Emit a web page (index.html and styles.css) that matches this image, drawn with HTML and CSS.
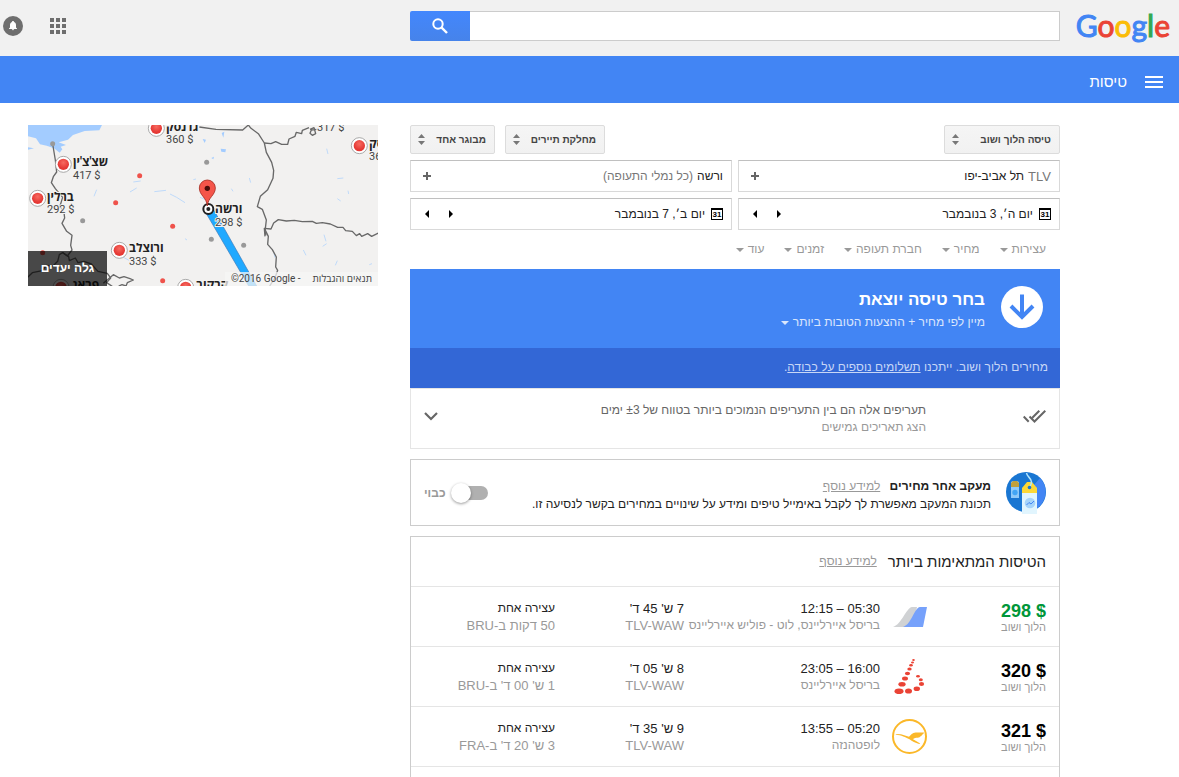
FILE: index.html
```html
<!DOCTYPE html>
<html lang="he" dir="rtl">
<head>
  <meta charset="UTF-8" />
  <title>טיסות</title>
  <meta name="viewport" content="width=device-width, initial-scale=1.0">
  <link rel="stylesheet" href="styles.css">
</head>
<body>
  <header class="topbar">
    <a class="logo" href="#" dir="ltr"><span class="b">G</span><span class="r">o</span><span class="y">o</span><span class="b">g</span><span class="g">l</span><span class="r">e</span></a>
    <form class="search">
      <input type="text" aria-label="חיפוש">
      <button type="button" aria-label="חפש">
        <svg width="16" height="16" viewBox="0 0 16 16" fill="none" stroke="#fff"><circle cx="6" cy="6" r="4.7" stroke-width="2"/><path d="M9.4 9.4L15 15" stroke-width="2.4"/></svg>
      </button>
    </form>
    <div class="top-icons">
      <a href="#" aria-label="אפליקציות">
        <svg width="16" height="16" viewBox="0 0 16 16" fill="#6e6e6e"><path d="M0 0h4v4H0zM6 0h4v4H6zM12 0h4v4h-4zM0 6h4v4H0zM6 6h4v4H6zM12 6h4v4h-4zM0 12h4v4H0zM6 12h4v4H6zM12 12h4v4h-4z"/></svg>
      </a>
      <a href="#" aria-label="התראות">
        <svg width="20" height="20" viewBox="0 0 20 20"><circle cx="10" cy="10" r="10" fill="#6e6e6e"/><path d="M10 5c.7 0 1 .4 1 1 1.500.5 2 1.700 2 3v2.500l1 1V13H6v-.5l1-1V9c0-1.300.6-2.500 2-3 0-.6.3-1 1-1zM8.800 13.300h2.400a1.200 1 0 0 1-2.400 0z" fill="#fff"/></svg>
      </a>
    </div>
  </header>

  <nav class="bluebar">
    <button type="button" aria-label="תפריט">
      <svg width="18" height="12" viewBox="0 0 18 12" fill="#fff"><path d="M0 0h18v2H0zM0 5h18v2H0zM0 10h18v2H0z"/></svg>
    </button>
    <a href="#">טיסות</a>
  </nav>

  <div class="page">
    <main>
      <div class="options">
        <label class="pick pick-trip">
          <select aria-label="סוג טיסה"><option>טיסה הלוך ושוב</option></select>
          <svg width="7" height="11" viewBox="0 0 7 11" fill="#777"><path d="M0 4l3.500-4L7 4zM0 7h7l-3.500 4z"/></svg>
        </label>
        <label class="pick pick-class">
          <select aria-label="מחלקה"><option>מחלקת תיירים</option></select>
          <svg width="7" height="11" viewBox="0 0 7 11" fill="#777"><path d="M0 4l3.500-4L7 4zM0 7h7l-3.500 4z"/></svg>
        </label>
        <label class="pick pick-people">
          <select aria-label="נוסעים"><option>מבוגר אחד</option></select>
          <svg width="7" height="11" viewBox="0 0 7 11" fill="#777"><path d="M0 4l3.500-4L7 4zM0 7h7l-3.500 4z"/></svg>
        </label>
      </div>

      <div class="fields">
        <div class="field">
          <span class="code">TLV</span>
          <input type="text" value="תל אביב-יפו" aria-label="מוצא">
          <button type="button" aria-label="הוסף מוצא"><svg width="8" height="8" viewBox="0 0 8 8" fill="#666"><path d="M3 0h2v3h3v2H5v3H3V5H0V3h3z"/></svg></button>
        </div>
        <div class="field">
          <input class="city" type="text" value="ורשה" aria-label="יעד">
          <span class="muted grow">(כל נמלי התעופה)</span>
          <button type="button" aria-label="הוסף יעד"><svg width="8" height="8" viewBox="0 0 8 8" fill="#666"><path d="M3 0h2v3h3v2H5v3H3V5H0V3h3z"/></svg></button>
        </div>
        <div class="field date">
          <svg class="cal" width="12" height="12" viewBox="0 0 12 12"><path d="M0 0h12v12H0zM1 2v9h10V2z" fill="#000" fill-rule="evenodd"/><text x="6" y="9" text-anchor="middle">31</text></svg>
          <input type="text" value="יום ה׳, 3 בנובמבר" aria-label="תאריך יציאה">
          <button type="button" aria-label="יום קודם"><svg width="4" height="8" viewBox="0 0 4 8"><path d="M0 0l4 4-4 4z"/></svg></button>
          <button type="button" aria-label="יום הבא"><svg width="4" height="8" viewBox="0 0 4 8"><path d="M4 0L0 4l4 4z"/></svg></button>
        </div>
        <div class="field date">
          <svg class="cal" width="12" height="12" viewBox="0 0 12 12"><path d="M0 0h12v12H0zM1 2v9h10V2z" fill="#000" fill-rule="evenodd"/><text x="6" y="9" text-anchor="middle">31</text></svg>
          <input type="text" value="יום ב׳, 7 בנובמבר" aria-label="תאריך חזרה">
          <button type="button" aria-label="יום קודם"><svg width="4" height="8" viewBox="0 0 4 8"><path d="M0 0l4 4-4 4z"/></svg></button>
          <button type="button" aria-label="יום הבא"><svg width="4" height="8" viewBox="0 0 4 8"><path d="M4 0L0 4l4 4z"/></svg></button>
        </div>
      </div>

      <div class="filters">
        <button type="button">עצירות</button>
        <button type="button">מחיר</button>
        <button type="button">חברת תעופה</button>
        <button type="button">זמנים</button>
        <button type="button">עוד</button>
      </div>

      <section class="choose">
        <svg width="42" height="42" viewBox="0 0 42 42" fill="none"><circle cx="21" cy="21" r="21" fill="#fff"/><path d="M21 8.500v22M10 20l11 11 11-11" stroke="#4285f4" stroke-width="4"/></svg>
        <div>
          <h1>בחר טיסה יוצאת</h1>
          <button class="sort" type="button">מיין לפי מחיר + ההצעות הטובות ביותר</button>
        </div>
      </section>
      <p class="fees">מחירים הלוך ושוב. ייתכנו <a href="#">תשלומים נוספים על כבודה</a>.</p>

      <section class="flex-dates">
        <svg class="checks" width="23" height="13" viewBox="0 0 23 13" fill="none" stroke="#666" stroke-width="2"><path d="M.7 6.500l5 5.300M6.500 6.500l5 5L22.300.8M9.300 7.800L16.300.8"/></svg>
        <div class="grow">
          <p>תעריפים אלה הם בין התעריפים הנמוכים ביותר בטווח של ±3 ימים</p>
          <a href="#">הצג תאריכים גמישים</a>
        </div>
        <button type="button" aria-label="הרחב"><svg width="14" height="9" viewBox="0 0 14 9" fill="none" stroke="#666" stroke-width="2.200"><path d="M1 1l6 6 6-6"/></svg></button>
      </section>

      <section class="track">
        <svg width="40" height="42" viewBox="0 0 40 42">
          <circle cx="20" cy="20" r="20" fill="#1976d2"/>
          <path d="M34 6A20 20 0 0 1 16 39.500V27z" fill="#4285f4"/>
          <path d="M5 14.500V10l2-1h4l2 1v16H5z" fill="#90caf9"/>
          <path d="M5 15v-4l2-2h4l2 2v4z" fill="#c0a03c"/>
          <circle cx="9" cy="20.500" r="2.700" fill="#42a5f5"/>
          <path d="M16 21h15v21H16z" fill="#e1f5fe"/>
          <path d="M16 21v-5l5-6h5l5 6v5z" fill="#fdd835"/>
          <circle cx="24" cy="31" r="5.300" fill="#a6d4fa"/>
          <path d="M20.500 33l2.500-2.500 2 1.500 3-3" fill="none" stroke="#4285f4"/>
          <path d="M20.500 1c.5 4 5 5 5 9 0 2-1 3-1.500 4.500" fill="none" stroke="#b3e5fc" stroke-width="1.500"/>
          <circle cx="23.500" cy="15.500" r="1.800" fill="#1976d2"/>
        </svg>
        <div class="track-text grow">
          <p><strong>מעקב אחר מחירים</strong> <a href="#">למידע נוסף</a></p>
          <p>תכונת המעקב מאפשרת לך לקבל באימייל טיפים ומידע על שינויים במחירים בקשר לנסיעה זו.</p>
        </div>
        <label class="switch"><input type="checkbox"><span>כבוי</span></label>
      </section>

      <section class="results">
        <div class="results-head"><h2>הטיסות המתאימות ביותר</h2><a href="#">למידע נוסף</a></div>
        <table>
          <colgroup><col class="c-price"><col class="c-logo"><col class="c-time"><col class="c-dur"><col></colgroup>
          <tr>
            <td class="price best"><b>$ 298</b><small>הלוך ושוב</small></td>
            <td><svg width="35" height="35" viewBox="0 0 35 35"><path d="M1 28C10 25 14 9 20 8h5l-4 20z" fill="#d0d2d4"/><path d="M11 28C20 25 22 9 28 8h7l-4 20z" fill="#76a1fb"/></svg></td>
            <td>05:30 – 12:15<span class="airline">בריסל איירליינס, לוט - פוליש איירליינס</span></td>
            <td>7 ש' 45 ד'<span>TLV-WAW</span></td>
            <td><div class="stops">עצירה אחת</div><span>50 דקות ב-BRU</span></td>
          </tr>
          <tr>
            <td class="price"><b>$ 320</b><small>הלוך ושוב</small></td>
            <td><svg width="35" height="35" viewBox="0 0 35 35" fill="#ea4335"><ellipse cx="21.500" cy="1" rx="1.300" ry="1"/><ellipse cx="20.500" cy="3.500" rx="1.500" ry="1"/><ellipse cx="19" cy="6.200" rx="1.800" ry="1.200"/><ellipse cx="17.500" cy="10" rx="2.200" ry="1.500"/><ellipse cx="15.500" cy="14.500" rx="2.600" ry="1.800"/><ellipse cx="13" cy="19.500" rx="3" ry="2"/><ellipse cx="10" cy="25.300" rx="3.600" ry="2.300"/><ellipse cx="7" cy="32.300" rx="4.500" ry="2.800"/><ellipse cx="16.500" cy="32" rx="3.500" ry="2.600"/><ellipse cx="24.800" cy="29.700" rx="3.200" ry="2.300"/><ellipse cx="29.500" cy="25" rx="2.600" ry="2"/><ellipse cx="28.800" cy="20.800" rx="2" ry="1.500"/><ellipse cx="26" cy="17.300" rx="1.900" ry="1.300"/></svg></td>
            <td>16:00 – 23:05<span class="airline">בריסל איירליינס</span></td>
            <td>8 ש' 05 ד'<span>TLV-WAW</span></td>
            <td><div class="stops">עצירה אחת</div><span>1 ש' 00 ד' ב-BRU</span></td>
          </tr>
          <tr>
            <td class="price"><b>$ 321</b><small>הלוך ושוב</small></td>
            <td><svg width="35" height="35" viewBox="0 0 35 35"><circle cx="17.500" cy="17.500" r="16.500" fill="none" stroke="#fbb829" stroke-width="2"/><path d="M4 15l5 .2 8 2.500c3-3 4-4.200 8-4.200h7c-.5 1.500-1 2-2 2.200-.4 1-.8 1.500-1.800 1.700-.6 1-2 1.400-4 1.400-1.500.2-2 1-3.500 1.200l7.500 4.500-1 .6c-4-1.600-7-2.600-9.700-4.800C13 18 10 16.500 3.500 15.500z" fill="#fbb829"/></svg></td>
            <td>05:20 – 13:55<span class="airline">לופטהנזה</span></td>
            <td>9 ש' 35 ד'<span>TLV-WAW</span></td>
            <td><div class="stops">עצירה אחת</div><span>3 ש' 20 ד' ב-FRA</span></td>
          </tr>
        </table>
      </section>
    </main>

    <aside class="map">
      <svg class="map-art" width="350" height="161" viewBox="0 0 350 161">
        <defs>
          <radialGradient id="dot" cx="50%" cy="35%"><stop offset="0" stop-color="#f76a60"/><stop offset="1" stop-color="#e53935"/></radialGradient>
          <g id="city"><circle cx="0" cy="0" r="24" fill="#fff" stroke="#999" stroke-width="2.500"/><circle cx="0" cy="0" r="17" fill="url(#dot)"/></g>
        </defs>
        <g transform="translate(-8 -7) scale(.33333)">
          <path d="M24 21h222l-8 16-44 2-35 12-15 14-28 8 22 8-16 5 5 8-8 10-17-13-22-8-20-4-12-18-24-6z" fill="#a3ccff"/>
          <g fill="#a3ccff"><path d="M605 45l8-4-3 18zM602 92l16 2-2 9-12-2zM548 63l10 2-4 10zM574 120l8-4-2 8zM24 88l18 3-18 4z"/></g>
          <g fill="none" stroke="#b5d5fb" stroke-width="2.500">
            <path d="M340 192l22-3M350 210l-20 12M403 221l35-4M450 228l20 10 25 16M540 238l20 8M688 180l4 14M634 212l5 8M230 215l-8 20M305 415l22 12M762 405l3 14M850 396l8 16M912 350l6 20M908 385l12-8M946 442l6-14M952 242l10 7M984 218l2 10M920 92l4 16M952 182l18-2M1048 440l8-3M495 362l6 4M520 185l8-2"/>
          </g>
          <g fill="none" stroke="#686868" stroke-width="4" stroke-linejoin="round">
            <path d="M98 78l8 48 4 36-10 14-6 18 12 18 22 26-8 26 12 20 2 16-8 16 14 24 16 12-4 30 4 14-14 18-14-10-10 6-5 20-14 14-20-2-12 16-30 6-14 14"/>
            <path d="M128 404l18 12 2 12 18-8 8 14 18-4 22 8 20 22 28 6 10 14-12 14 18 12"/>
            <path d="M250 496l30-26 18 10 14-4 18 6 10 4-18 8-4 10-12-4-10 4"/>
            <path d="M538 27l50 7 80 2 17-15M685 21l8 10 22 16 18 28 6 28 16 30 6 24-2 24-16 34-22 20-9 31 15 8 12 32-4 34 3 12"/>
            <path d="M733 75l20 2 14-6 18 8 18 0 4-16 18-8 4-12 16 4 2-10 20-8M870 34l12-5 5 18-10 5-7-6 4-10 16-2"/>
            <path d="M735 355l-2-24 20 2 8-18 14-10 24 4 24-2 24 4 30-1 12 6 18-2 24 4 22 10 16 0 8 10 20 2 12 13 10-6 6 8 18-8 12 8 20-10"/>
            <path d="M735 335l10 20-2 24 14 16 12 22-2 30 6 10-8 22-16 25"/>
          </g>
          <path d="M555 280L686 504h24L578 270z" fill="#20a9ff" stroke="#3c78b8" stroke-width="2"/>
          <g fill="#ef524b"><circle cx="359" cy="173" r="7.500"/><circle cx="287" cy="254" r="7.500"/><circle cx="458" cy="325" r="7.500"/><circle cx="428" cy="488" r="7.500"/><circle cx="68" cy="404" r="7.500"/></g>
          <g fill="#999"><circle cx="98" cy="77" r="7.500"/><circle cx="560" cy="133" r="7.500"/><circle cx="188" cy="308" r="7.500"/><circle cx="574" cy="364" r="7.500"/><circle cx="671" cy="382" r="7.500"/></g>
          <use href="#city" x="409" y="31"/><use href="#city" x="1018" y="83"/><use href="#city" x="130" y="139"/><use href="#city" x="53" y="241"/><use href="#city" x="298" y="397"/><use href="#city" x="497" y="508"/><use href="#city" x="123" y="508"/>
          <circle cx="565" cy="273" r="15" fill="#fff" stroke="#222" stroke-width="6"/><circle cx="565" cy="273" r="6" fill="#222"/>
          <path d="M562 264c-2-26-24-32-24-54a24 24 0 0 1 48 0c0 22-22 28-24 54z" fill="#f4554a" stroke="#a52c22" stroke-width="2.500"/><circle cx="562" cy="211" r="8" fill="#4a0d0a"/>
        </g>
        <g class="city-name"><text x="138" y="6">גדנסק</text><text x="341" y="23">מינסק</text><text x="45" y="41">שצ'צ'ין</text><text x="19" y="76">ברלין</text><text x="187" y="88">ורשה</text><text x="101" y="127">ורוצלב</text><text x="44" y="164">פראג</text><text x="168" y="164">קרקוב</text></g>
        <g class="city-price"><text x="138" y="18">360 $</text><text x="289" y="6">317 $</text><text x="341" y="35">369 $</text><text x="45" y="54">417 $</text><text x="19" y="88">292 $</text><text x="187" y="101">298 $</text><text x="101" y="140">333 $</text></g>
      </svg>
      <a class="explore" href="#">גלה יעדים</a>
      <div class="credit"><a href="#">תנאים והגבלות</a><span dir="ltr">©2016 Google -</span></div>
    </aside>
  </div>
</body>
</html>
```
FILE: styles.css
```css
* {
  box-sizing: border-box;
  margin: 0;
  padding: 0;
}

body {
  display: flex;
  flex-direction: column;
  min-height: 100vh;
  font-family: "Liberation Sans", Arial, sans-serif;
  font-size: 12px;
  line-height: 17px;
  color: #222;
  background: #fff;
}

svg {
  display: block;
  flex: none;
}

a {
  color: inherit;
}

button, input, select {
  font: inherit;
  color: inherit;
  border: 0;
  background: none;
}

button {
  cursor: pointer;
}

.grow {
  flex: 1;
}

/* top bar */

.topbar {
  display: flex;
  align-items: center;
  height: 56px;
  padding-left: 3px;
  background: #f1f1f1;
}

.logo {
  width: 119px;
  padding: 0 9px 6px 0;
  font-family: Lato, sans-serif;
  font-size: 30px;
  line-height: 40px;
  text-align: right;
  text-decoration: none;
}

.logo .b { color: #4285f4; }
.logo .r { color: #ea4335; }
.logo .y { color: #fbbc05; }
.logo .g { color: #34a853; }

.logo span {
  -webkit-text-stroke: 1px currentColor;
}

.search {
  display: flex;
  width: 650px;
  height: 30px;
  margin-bottom: 4px;
}

.search input {
  flex: 1;
  padding: 0 8px;
  background: #fff;
  border: 1px solid #ccc;
  border-left: 0;
}

.search button {
  display: grid;
  place-items: center;
  width: 60px;
  border-radius: 2px 0 0 2px;
  background: linear-gradient(#4387fd, #4683ea);
}

.top-icons {
  display: flex;
  align-items: center;
  gap: 27px;
  margin-right: auto;
  margin-bottom: 4px;
}

.bluebar {
  display: flex;
  align-items: center;
  gap: 18px;
  height: 47px;
  padding: 4px 16px 0;
  color: #fff;
  background: #4285f4;
}

.bluebar a {
  font-size: 15px;
  text-decoration: none;
}

/* page columns */

.page {
  flex: 1;
  display: flex;
  justify-content: space-between;
  padding: 22px 119px 0 28px;
}

main {
  display: flex;
  flex-direction: column;
  width: 650px;
}

/* search options */

.options {
  display: flex;
  gap: 10px;
  margin-bottom: 6px;
}

.pick {
  position: relative;
}

.pick-trip {
  width: 116px;
  margin-left: auto;
}

.pick-class { width: 100px; }
.pick-people { width: 85px; }

.pick select {
  appearance: none;
  width: 100%;
  height: 29px;
  padding: 0 8px;
  font-size: 10px;
  font-weight: bold;
  color: #444;
  border: 1px solid #dcdcdc;
  border-radius: 2px;
  background: linear-gradient(#f5f5f5, #f1f1f1);
}

.pick svg {
  position: absolute;
  left: 8px;
  top: 9px;
}

.fields {
  display: grid;
  grid-template-columns: 1fr 1fr;
  gap: 6px;
}

.field {
  display: flex;
  align-items: center;
  gap: 4px;
  height: 32px;
  padding: 0 8px;
  border: 1px solid #d9d9d9;
  border-top-color: #c0c0c0;
}

.field input {
  flex: 1;
  min-width: 0;
}

.field .city {
  flex: none;
  width: 26px;
}

.field button {
  display: grid;
  place-items: center;
  width: 16px;
  height: 20px;
}

.date {
  gap: 6px;
}

.date button + button {
  margin-right: 2px;
}

.cal text {
  font-size: 8px;
  font-weight: bold;
  direction: ltr;
}

.code, .muted {
  color: #777;
}

.code {
  font-size: 13px;
}

.filters {
  display: flex;
  gap: 20px;
  height: 39px;
  padding: 0 14px;
  color: #999;
}

.filters button, .sort {
  display: flex;
  align-items: center;
  gap: 4px;
}

.filters button::after, .sort::after {
  content: "";
  border: 4px solid transparent;
  border-top-color: currentColor;
  border-bottom: 0;
}

/* outbound flight panel */

.choose {
  display: flex;
  gap: 16px;
  height: 79px;
  padding: 17px;
  color: #fff;
  background: #4285f4;
}

.choose h1 {
  font-size: 17px;
  line-height: 28px;
}

.sort {
  opacity: .8;
}

.fees {
  padding: 11px 12px 12px;
  color: #c8d7f6;
  background: #3367d6;
}

.flex-dates {
  display: flex;
  align-items: flex-start;
  height: 61px;
  padding: 13px;
  border: 1px solid #e5e5e5;
  color: #666;
}

.checks {
  margin: 8px 0 0 97px;
}

.flex-dates a {
  color: #999;
  text-decoration: none;
}

.flex-dates button {
  padding: 10px 0;
}

.track {
  display: flex;
  align-items: center;
  gap: 15px;
  height: 67px;
  margin: 10px 0;
  padding: 0 13px;
  border: 1px solid #ccc;
  line-height: 18px;
}

.track-text {
  padding-top: 5px;
}

.track p a, .results-head a {
  margin-right: 6px;
  color: #999;
}

.switch {
  display: flex;
  align-items: center;
  gap: 8px;
  color: #999;
  font-weight: bold;
}

.switch input {
  appearance: none;
  position: relative;
  width: 34px;
  height: 14px;
  border-radius: 7px;
  background: #b0b0b0;
}

.switch input::before {
  content: "";
  position: absolute;
  left: -3px;
  top: -3px;
  width: 20px;
  height: 20px;
  border-radius: 50%;
  background: #fff;
  box-shadow: 0 1px 3px rgba(0, 0, 0, .4);
}

/* results */

.results {
  flex: 1;
  border: 1px solid #ccc;
  border-bottom: 0;
}

.results-head {
  display: flex;
  align-items: center;
  gap: 5px;
  height: 49px;
  padding: 0 13px;
}

.results-head h2 {
  font-size: 15px;
  font-weight: normal;
}

table {
  width: 100%;
  table-layout: fixed;
  border-collapse: collapse;
  font-size: 13px;
}

.c-price { width: 132px; }
.c-logo { width: 47px; }
.c-time { width: 196px; }
.c-dur { width: 129px; }

tr {
  height: 60px;
  border-top: 1px solid #e5e5e5;
}

tr:last-child {
  border-bottom: 1px solid #e5e5e5;
}

td {
  white-space: nowrap;
}

td span {
  display: block;
  color: #999;
}

.airline, .stops {
  font-size: 12px;
}

.price {
  padding: 3px 13px 0 0;
  color: #000;
}

.price b {
  display: block;
  font-size: 18px;
}

.price small {
  display: block;
  font-size: 11px;
  line-height: 14px;
  color: #999;
}

.best b {
  color: #009639;
}

/* destination map */

.map {
  position: relative;
  align-self: flex-start;
  width: 350px;
  overflow: hidden;
  background: #f2f1f0;
}

.map-art {
  direction: ltr;
}

.city-name, .city-price {
  font-family: Roboto, "Open Sans", sans-serif;
  paint-order: stroke;
  stroke: #f2f1f0;
  stroke-width: 2px;
}

.city-name {
  font-size: 12px;
  font-weight: bold;
  fill: #222;
}

.city-price {
  font-size: 11px;
  fill: #444;
}

.explore {
  position: absolute;
  left: 0;
  bottom: 0;
  width: 79px;
  font-size: 12px;
  font-weight: bold;
  line-height: 35px;
  text-align: center;
  text-decoration: none;
  color: #fff;
  background: rgba(0, 0, 0, .7);
}

.credit {
  position: absolute;
  right: 0;
  bottom: 0;
  display: flex;
  gap: 12px;
  padding: 0 6px;
  font-family: Roboto, "Open Sans", sans-serif;
  font-size: 10px;
  line-height: 14px;
  color: #444;
  background: rgba(245, 245, 245, .75);
}

.credit a {
  text-decoration: none;
}
```
